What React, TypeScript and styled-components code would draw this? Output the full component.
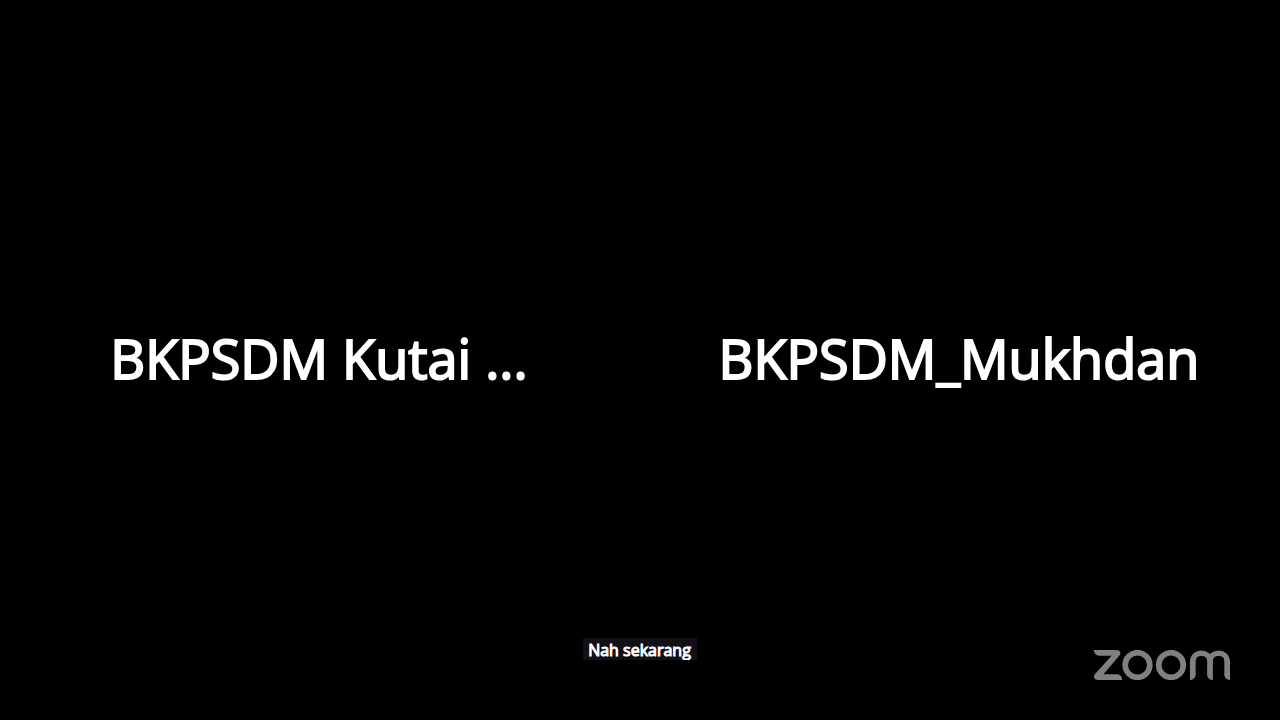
import React from "react";
import styled, { createGlobalStyle } from "styled-components";

const GlobalStyle = createGlobalStyle`
  body { margin: 0; background: #000; }
`;

const Stage = styled.main`
  position: relative;
  display: grid;
  grid-template-columns: 1fr 1fr;
  min-height: 100vh;
  overflow: hidden;
  background: #000;
  color: #fff;
  font-family: "Open Sans", "Noto Sans", sans-serif;
`;

const Tile = styled.section`
  display: flex;
  align-items: center;
  justify-content: center;
  min-width: 0;
`;

const ParticipantName = styled.h2`
  margin: 0;
  padding: 0 2px 4px 0;
  font-size: 54px;
  line-height: 76px;
  font-weight: 400;
  -webkit-text-stroke: 2px #fff;
  white-space: nowrap;
`;

const Caption = styled.p`
  position: absolute;
  bottom: 60px;
  left: 50%;
  transform: translateX(-50%);
  margin: 0;
  padding: 3px 6px 0 5px;
  background: #101016;
  font-size: 16px;
  line-height: 19px;
  font-weight: 400;
  -webkit-text-stroke: 1px #fff;
  white-space: nowrap;
  overflow: hidden;
`;

const Watermark = styled.svg`
  position: absolute;
  right: 50px;
  bottom: 40px;
  width: 136px;
  height: 30px;
`;

const participants = ["BKPSDM Kutai ...", "BKPSDM_Mukhdan"];

export default function App() {
  return (
    <>
      <GlobalStyle />
      <Stage>
        {participants.map((name) => (
          <Tile key={name}>
            <ParticipantName>{name}</ParticipantName>
          </Tile>
        ))}
        <Caption>Nah sekarang</Caption>
        <Watermark viewBox="0 0 136 30" role="img" aria-label="zoom">
          <path
            fill="#808080"
            d="M0 0H22C26.500 0 28 3.500 24.500 6.500L9.500 24.300H22.500C26 24.300 28 26.500 28.200 30H4.500C0 30-1.500 26.500 1.500 23.500L17.500 5.700H5.500C2 5.700 0 3.500 0 0Z"
          />
          <g fill="none" stroke="#808080" strokeWidth="5.700">
            <circle cx="43.500" cy="15" r="12.300" />
            <circle cx="77" cy="15" r="12.300" />
            <path d="M98.800 25V11.500C98.800 0.500 116 0.500 116 11.500V25M116 11.500C116 0.500 133.200 0.500 133.200 11.500V25" />
          </g>
          <path
            fill="#808080"
            d="M95.950 24H101.650C101.650 27.500 99.500 30 95.950 30ZM113.150 24H118.850V30C115.300 30 113.150 27.500 113.150 24ZM130.350 24H136.050V30C132.500 30 130.350 27.500 130.350 24Z"
          />
        </Watermark>
      </Stage>
    </>
  );
}
